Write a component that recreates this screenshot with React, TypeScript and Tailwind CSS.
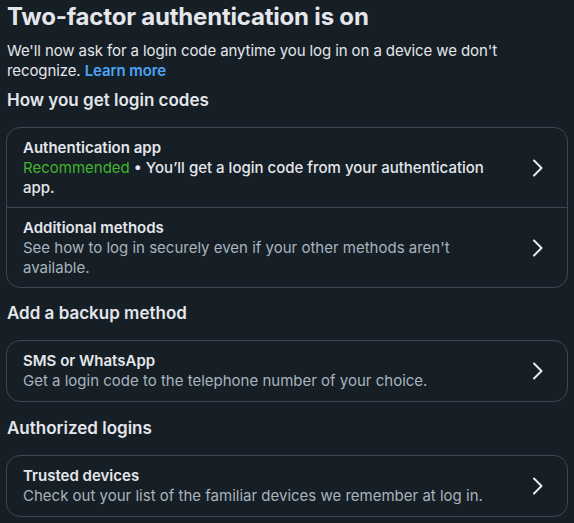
import React from 'react';

const Chevron = () => (
  <svg width="12" height="18" viewBox="0 0 12 18" fill="none" className="shrink-0">
    <path d="M2 1.5 L9.5 9 L2 16.5" stroke="#e8eaed" strokeWidth="2" strokeLinecap="round" strokeLinejoin="round" />
  </svg>
);

interface RowProps {
  title: string;
  children: React.ReactNode;
  divider?: boolean;
  pad?: string;
}

const Row: React.FC<RowProps> = ({ title, children, divider, pad = 'pt-[10px] pb-[9px]' }) => (
  <div className={`flex items-center pl-4 pr-[23px] ${pad} ${divider ? 'border-t border-[#3b4753]' : ''}`}>
    <div className="flex-1 pr-6">
      <div className="text-[15px] leading-5 font-semibold text-[#e4e6eb]">{title}</div>
      <div className="text-[15px] leading-5 text-[#a8b3bd]">{children}</div>
    </div>
    <Chevron />
  </div>
);

export default function App() {
  return (
    <div className="w-[574px] h-[523px] bg-[#161f26] text-[#e4e6eb] px-[6px] pt-[2px] overflow-hidden" style={{ fontFamily: 'Inter, "Noto Sans", sans-serif' }}>
      <h1 className="text-[24px] leading-[30px] font-bold tracking-[-0.2px] px-px">Two-factor authentication is on</h1>
      <p className="mt-[9px] text-[15px] leading-5 text-[#e4e6eb] px-px tracking-[-0.1px]">
        We'll now ask for a login code anytime you log in on a device we don't recognize.{' '}
        <span className="text-[#4ba3f5] font-semibold">Learn more</span>
      </p>
      <h2 className="mt-[8px] text-[17px] leading-[22px] font-semibold px-px">How you get login codes</h2>
      <div className="mt-[16px] border border-[#3b4753] rounded-[14px]">
        <Row title="Authentication app">
          <span className="text-[#3fb52c]">Recommended</span>
          <span className="text-[#e4e6eb] font-medium"> • You’ll get a login code from your authentication app.</span>
        </Row>
        <Row title="Additional methods" divider>
          See how to log in securely even if your other methods aren't available.
        </Row>
      </div>
      <h2 className="mt-[14px] text-[17px] leading-[22px] font-semibold px-px">Add a backup method</h2>
      <div className="mt-[16px] border border-[#3b4753] rounded-[14px]">
        <Row title="SMS or WhatsApp" pad="py-[10px]">Get a login code to the telephone number of your choice.</Row>
      </div>
      <h2 className="mt-[15px] text-[17px] leading-[22px] font-semibold px-px">Authorized logins</h2>
      <div className="mt-[16px] border border-[#3b4753] rounded-[14px]">
        <Row title="Trusted devices" pad="py-[10px]">Check out your list of the familiar devices we remember at log in.</Row>
      </div>
    </div>
  );
}
